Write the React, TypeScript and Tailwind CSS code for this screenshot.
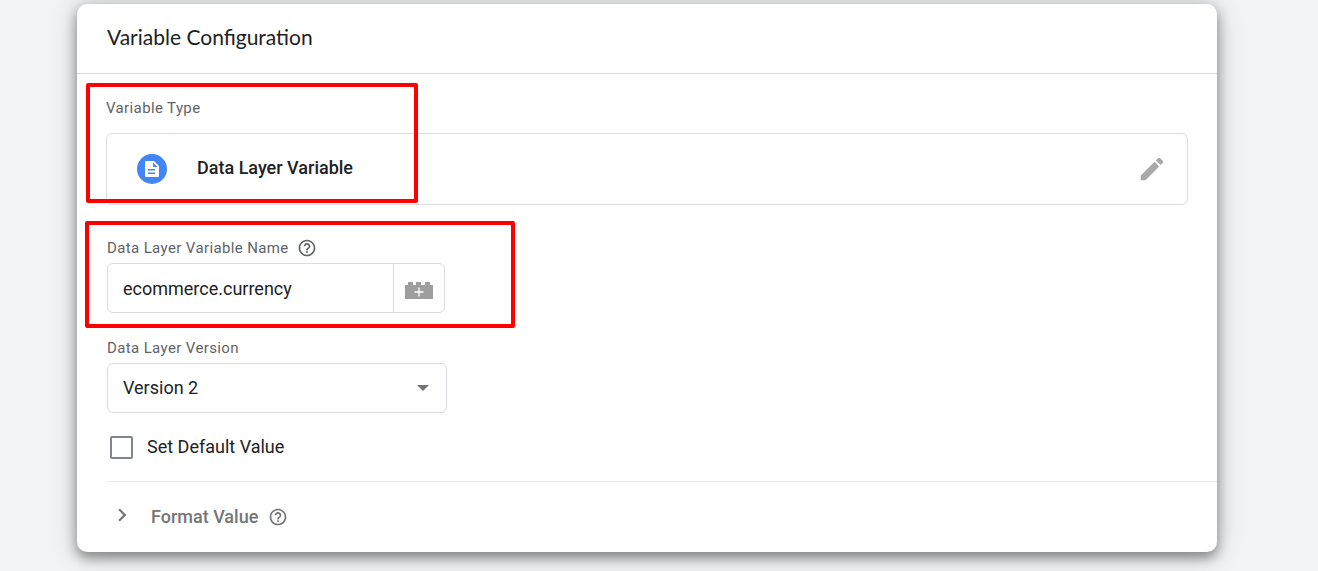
import React from "react";
import { MdEdit, MdHelpOutline, MdChevronRight } from "react-icons/md";

function DocumentIcon() {
  return (
    <svg viewBox="0 0 30 30" className="h-[30px] w-[30px]" aria-hidden="true">
      <circle cx="15" cy="15" r="15" fill="#4285f4" />
      <path
        fill="#fff"
        fillRule="evenodd"
        d="M9 7H17l5 5v10a1 1 0 0 1-1 1H9a1 1 0 0 1-1-1V8a1 1 0 0 1 1-1ZM16 8.500V13h4.500ZM11 15v1.500h7V15ZM11 18.500V20h7v-1.500Z"
      />
    </svg>
  );
}

function BrickIcon() {
  return (
    <svg viewBox="0 0 28 18" className="h-[18px] w-7" aria-hidden="true">
      <path fill="#9e9e9e" d="M0 4h3V1h5v3h3V1h5v3h4V1h5v3h3v14H0Z" />
      <path stroke="#fff" strokeWidth="1.300" d="M14 6.500v9M9.500 11h9" />
    </svg>
  );
}

interface HelpButtonProps {
  label: string;
}

function HelpButton({ label }: HelpButtonProps) {
  return (
    <button type="button" aria-label={label}>
      <MdHelpOutline className="h-5 w-5" />
    </button>
  );
}

function VariableType() {
  return (
    <section className="px-[29px] pt-[22px]">
      <h2 className="text-[15px] leading-6 tracking-wide text-[#5f6368]">
        Variable Type
      </h2>
      <div className="mt-[13px] flex h-[72px] items-center rounded-md border border-[#dadce0] pr-5 pl-[30px]">
        <DocumentIcon />
        <span className="ml-[30px] flex-1 pb-0.5 text-lg font-medium">
          Data Layer Variable
        </span>
        <button
          type="button"
          aria-label="Edit variable type"
          className="text-[#a9a9a9]"
        >
          <MdEdit className="h-[30px] w-[30px]" />
        </button>
      </div>
    </section>
  );
}

function VariableFields() {
  return (
    <section className="mt-[31px] pl-[30px]">
      <div className="flex items-center gap-2 text-[15px] leading-6 tracking-wide text-[#5f6368]">
        <label htmlFor="variable-name">Data Layer Variable Name</label>
        <HelpButton label="About the variable name" />
      </div>
      <div className="mt-[3px] flex h-[50px] w-[338px] rounded-md border border-[#dadce0]">
        <input
          id="variable-name"
          type="text"
          defaultValue="ecommerce.currency"
          className="min-w-0 flex-1 rounded-l-md px-[15px] pt-0.5 text-lg outline-none"
        />
        <button
          type="button"
          aria-label="Insert variable"
          className="flex w-[51px] items-center justify-center border-l border-[#dadce0] pt-1"
        >
          <BrickIcon />
        </button>
      </div>

      <label
        htmlFor="variable-version"
        className="mt-[23px] block text-[15px] leading-6 tracking-wide text-[#5f6368]"
      >
        Data Layer Version
      </label>
      <div className="relative mt-[3px] w-[340px]">
        <select
          id="variable-version"
          defaultValue="2"
          className="h-[50px] w-full appearance-none rounded-md border border-[#dadce0] bg-white px-[15px] text-lg outline-none"
        >
          <option value="1">Version 1</option>
          <option value="2">Version 2</option>
        </select>
        <svg
          viewBox="0 0 12 6"
          className="pointer-events-none absolute top-[22px] right-[18px] h-1.5 w-3"
          aria-hidden="true"
        >
          <path fill="#757575" d="M0 0h12L6 6Z" />
        </svg>
      </div>

      <label className="mt-[22px] flex h-6 items-center gap-[14px] pl-[3px] text-lg">
        <input
          type="checkbox"
          className="h-[23px] w-[23px] appearance-none rounded-xs border-2 border-[#80868b] checked:bg-[#4285f4]"
        />
        Set Default Value
      </label>
    </section>
  );
}

function FormatValue() {
  return (
    <section className="mt-[22px] ml-[30px] flex h-[71px] items-center border-t border-[#e8eaed] text-[#757575]">
      <button
        type="button"
        className="flex items-center gap-4 pl-0.5 text-lg font-medium"
      >
        <MdChevronRight className="mb-1 h-[26px] w-[26px]" />
        Format Value
      </button>
      <div className="ml-2.5 flex">
        <HelpButton label="About format value" />
      </div>
    </section>
  );
}

function App() {
  return (
    <div className="min-h-screen overflow-hidden bg-[#f1f3f4] pt-1 pr-[101px] pb-[19px] pl-[77px] font-[Roboto,sans-serif] text-[#202124]">
      <main className="relative rounded-[10px] bg-white shadow-[0_6px_12px_rgba(0,0,0,0.35),0_2px_24px_rgba(0,0,0,0.25)]">
        <header className="flex h-[70px] items-center border-b border-[#dadce0] px-[30px]">
          <h1 className="pb-1 font-[Lato,sans-serif] text-[21px]">
            Variable Configuration
          </h1>
        </header>
        <VariableType />
        <VariableFields />
        <FormatValue />

        {/* highlight boxes */}
        <div className="pointer-events-none absolute top-[79px] left-[9px] h-[120px] w-[332px] rounded-xs border-4 border-[#ff0000]" />
        <div className="pointer-events-none absolute top-[217px] left-2 h-[107px] w-[430px] rounded-xs border-4 border-[#ff0000]" />
      </main>
    </div>
  );
}

export default App;
